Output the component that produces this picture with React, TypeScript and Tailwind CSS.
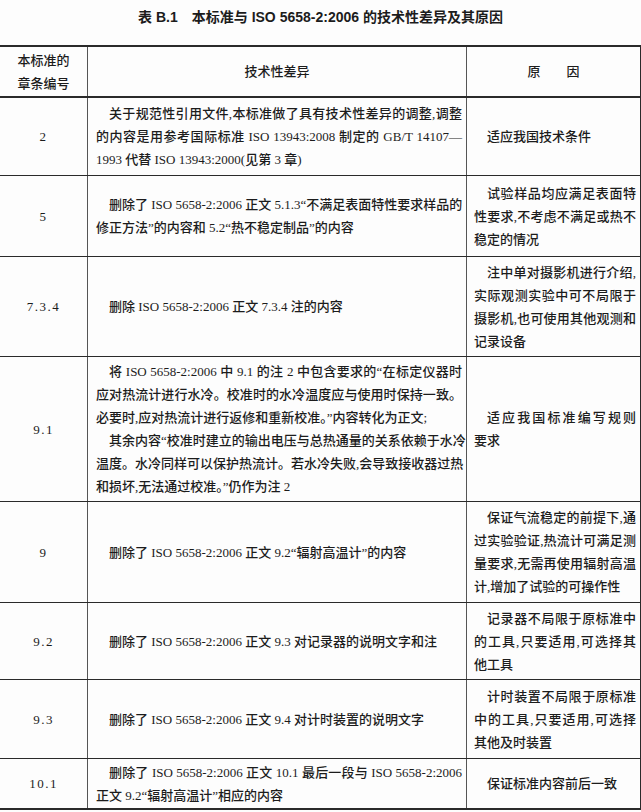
import clsx from "clsx";

type Line = { t: string; indent?: boolean; full?: boolean };

interface Row {
  no: string;
  h: string;
  border: string;
  diff: Line[];
  reason: Line[];
}

const rows: Row[] = [
  {
    no: "2",
    h: "h-[78px]",
    border: "border-b",
    diff: [
      { t: "关于规范性引用文件,本标准做了具有技术性差异的调整,调整", indent: true, full: true },
      { t: "的内容是用参考国际标准 ISO 13943:2008 制定的 GB/T 14107—", full: true },
      { t: "1993 代替 ISO 13943:2000(见第 3 章)" },
    ],
    reason: [{ t: "适应我国技术条件", indent: true }],
  },
  {
    no: "5",
    h: "h-[81px]",
    border: "border-b",
    diff: [
      { t: "删除了 ISO 5658-2:2006 正文 5.1.3“不满足表面特性要求样品的", indent: true, full: true },
      { t: "修正方法”的内容和 5.2“热不稳定制品”的内容" },
    ],
    reason: [
      { t: "试验样品均应满足表面特", indent: true, full: true },
      { t: "性要求,不考虑不满足或热不", full: true },
      { t: "稳定的情况" },
    ],
  },
  {
    no: "7.3.4",
    h: "h-[100px]",
    border: "border-b",
    diff: [{ t: "删除 ISO 5658-2:2006 正文 7.3.4 注的内容", indent: true }],
    reason: [
      { t: "注中单对摄影机进行介绍,", indent: true, full: true },
      { t: "实际观测实验中可不局限于", full: true },
      { t: "摄影机,也可使用其他观测和", full: true },
      { t: "记录设备" },
    ],
  },
  {
    no: "9.1",
    h: "h-[145px]",
    border: "border-b",
    diff: [
      { t: "将 ISO 5658-2:2006 中 9.1 的注 2 中包含要求的“在标定仪器时", indent: true, full: true },
      { t: "应对热流计进行水冷。校准时的水冷温度应与使用时保持一致。", full: true },
      { t: "必要时,应对热流计进行返修和重新校准。”内容转化为正文;" },
      { t: "其余内容“校准时建立的输出电压与总热通量的关系依赖于水冷", indent: true, full: true },
      { t: "温度。水冷同样可以保护热流计。若水冷失败,会导致接收器过热", full: true },
      { t: "和损坏,无法通过校准。”仍作为注 2" },
    ],
    reason: [
      { t: "适应我国标准编写规则", indent: true, full: true },
      { t: "要求" },
    ],
  },
  {
    no: "9",
    h: "h-[101px]",
    border: "border-b",
    diff: [{ t: "删除了 ISO 5658-2:2006 正文 9.2“辐射高温计”的内容", indent: true }],
    reason: [
      { t: "保证气流稳定的前提下,通", indent: true, full: true },
      { t: "过实验验证,热流计可满足测", full: true },
      { t: "量要求,无需再使用辐射高温", full: true },
      { t: "计,增加了试验的可操作性" },
    ],
  },
  {
    no: "9.2",
    h: "h-[77px]",
    border: "border-b",
    diff: [{ t: "删除了 ISO 5658-2:2006 正文 9.3 对记录器的说明文字和注", indent: true }],
    reason: [
      { t: "记录器不局限于原标准中", indent: true, full: true },
      { t: "的工具,只要适用,可选择其", full: true },
      { t: "他工具" },
    ],
  },
  {
    no: "9.3",
    h: "h-[79px]",
    border: "border-b",
    diff: [{ t: "删除了 ISO 5658-2:2006 正文 9.4 对计时装置的说明文字", indent: true }],
    reason: [
      { t: "计时装置不局限于原标准", indent: true, full: true },
      { t: "中的工具,只要适用,可选择", full: true },
      { t: "其他及时装置" },
    ],
  },
  {
    no: "10.1",
    h: "h-[51px]",
    border: "border-b-2",
    diff: [
      { t: "删除了 ISO 5658-2:2006 正文 10.1 最后一段与 ISO 5658-2:2006", indent: true, full: true },
      { t: "正文 9.2“辐射高温计”相应的内容" },
    ],
    reason: [{ t: "保证标准内容前后一致", indent: true }],
  },
];

function TextLines({ lines }: { lines: Line[] }) {
  return (
    <>
      {lines.map((l, i) => (
        <div
          key={i}
          className={clsx(
            "whitespace-nowrap",
            l.indent && "pl-[13px]",
            l.full && "[text-align-last:justify]"
          )}
        >
          {l.t}
        </div>
      ))}
    </>
  );
}

export default function App() {
  return (
    <div className="w-[641px] h-[812px] bg-[#fdfdfd] text-[#1c1c1c] font-['Liberation_Serif','Noto_Sans_CJK_SC',serif] text-[13px] leading-[23px] font-medium">
      <div className="h-[45px] pt-[7px] text-center font-['Liberation_Sans','Noto_Sans_CJK_SC',sans-serif] text-[14px] leading-[20px] font-bold">
        表 B.1　本标准与 ISO 5658-2:2006 的技术性差异及其原因
      </div>

      <div className="w-[641px] border-t-2 border-r border-[#2a2a2a]">
        <div className="grid grid-cols-[88px_379px_1fr] h-[51px] border-b-2 border-[#2a2a2a]">
          <div className="flex flex-col items-center justify-center border-r border-[#555]">
            <div>本标准的</div>
            <div>章条编号</div>
          </div>
          <div className="flex items-center justify-center border-r border-[#555]">技术性差异</div>
          <div className="flex items-center justify-center whitespace-pre">原　　因</div>
        </div>

        {rows.map((r) => (
          <div
            key={r.no}
            className={clsx("grid grid-cols-[88px_379px_1fr] border-[#2a2a2a]", r.h, r.border)}
          >
            <div className="flex items-center justify-center border-r border-[#555] tracking-[1.5px]">
              {r.no}
            </div>
            <div className="flex flex-col justify-center border-r border-[#555] pl-[8px] pr-[4px]">
              <TextLines lines={r.diff} />
            </div>
            <div className="flex flex-col justify-center pl-[7px] pr-[4px]">
              <TextLines lines={r.reason} />
            </div>
          </div>
        ))}
      </div>
    </div>
  );
}
